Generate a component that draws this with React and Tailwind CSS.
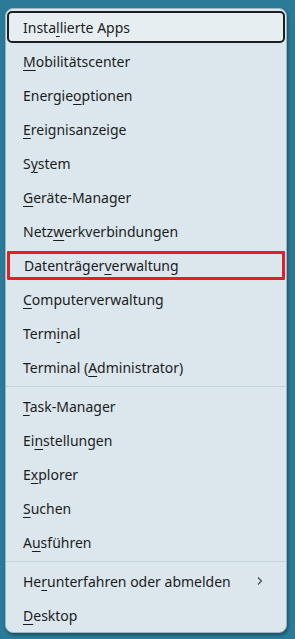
import React from "react";

const U = ({ children }) => <span className="underline decoration-1 underline-offset-[3px]">{children}</span>;

const groups = [
  [
    [<>Insta<U>l</U>lierte Apps</>, "focus"],
    [<><U>M</U>obilitätscenter</>],
    [<>Energie<U>o</U>ptionen</>],
    [<><U>E</U>reignisanzeige</>],
    [<>S<U>y</U>stem</>],
    [<><U>G</U>eräte-Manager</>],
    [<>Netz<U>w</U>erkverbindungen</>],
    [<>Datenträger<U>v</U>erwaltung</>, "red"],
    [<><U>C</U>omputerverwaltung</>],
    [<>Term<U>i</U>nal</>],
    [<>Terminal (<U>A</U>dministrator)</>],
  ],
  [
    [<><U>T</U>ask-Manager</>],
    [<>Ei<U>n</U>stellungen</>],
    [<>E<U>x</U>plorer</>],
    [<><U>S</U>uchen</>],
    [<>A<U>u</U>sführen</>],
  ],
  [
    [<>He<U>r</U>unterfahren oder abmelden</>, "sub"],
    [<><U>D</U>esktop</>],
  ],
];

function Item({ label, kind }) {
  let ring = "h-full border-2 border-transparent";
  if (kind === "focus") ring = "h-full border-2 border-[#1b1f22] rounded-[5px] bg-[#e6eef2]";
  if (kind === "red") ring = "h-[29px] border-[3px] border-[#e21e26] rounded-[1px]";
  return (
    <div className="h-[34px] flex items-center px-px py-px">
      <div className={`flex-1 flex items-center pl-[14px] pr-[18px] ${ring}`}>
        <span className="flex-1">{label}</span>
        {kind === "sub" && (
          <svg width="8" height="10" viewBox="0 0 8 10" className="text-[#444] mr-[1px]">
            <path d="M2 1.5 L5.5 5 L2 8.5" fill="none" stroke="currentColor" strokeWidth="1.1" />
          </svg>
        )}
      </div>
    </div>
  );
}

export default function App() {
  return (
    <div className="w-[295px] h-[639px] bg-[#2a7a98] pt-[8px] pl-[5px]">
      <div
        className="w-[282px] h-[625px] bg-[#dbe7ed] rounded-[8px] border border-[#9fb6c1] shadow-[1px_2px_3px_rgba(0,0,0,0.35)] pt-[1px] text-[#1c1c1c] text-[14px]"
        style={{ fontFamily: '"Noto Sans", "Open Sans", sans-serif' }}
      >
        {groups.map((g, gi) => (
          <div key={gi}>
            {gi > 0 && <div className="h-[5px] flex items-center"><div className="h-px w-full bg-[#c5d3da]" /></div>}
            {g.map(([label, kind], i) => (
              <Item key={i} label={label} kind={kind} />
            ))}
          </div>
        ))}
      </div>
    </div>
  );
}
